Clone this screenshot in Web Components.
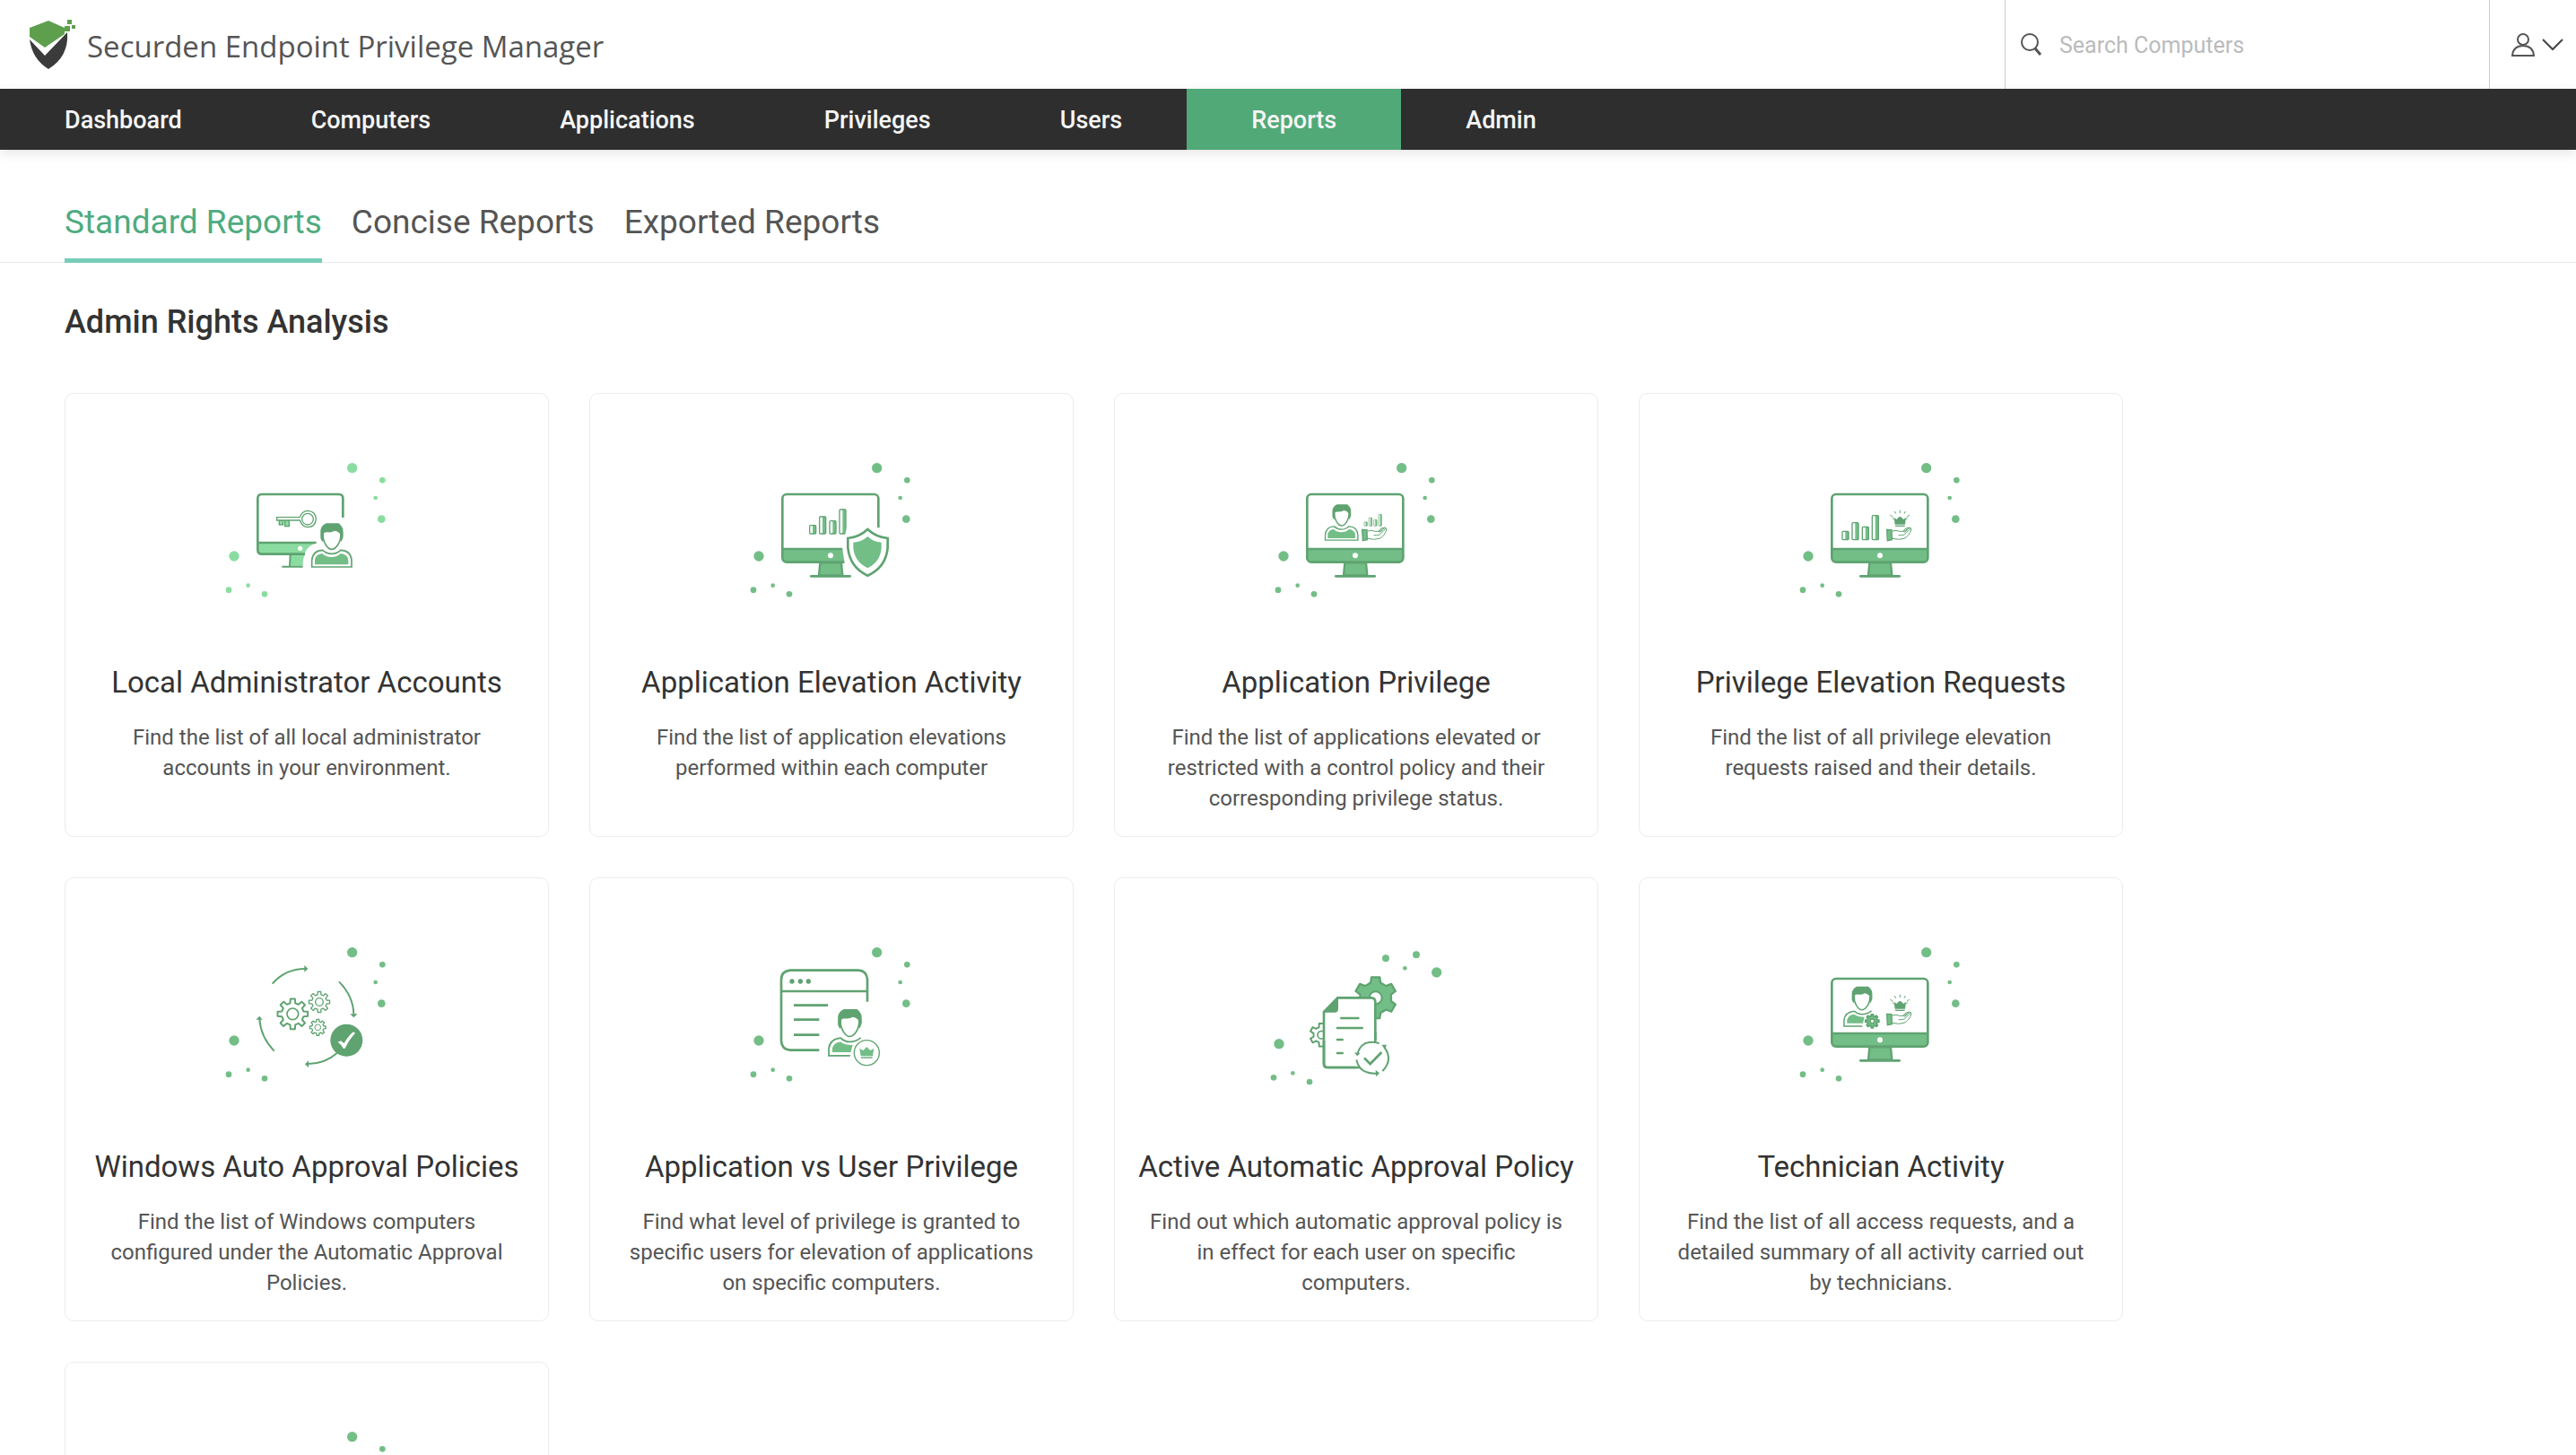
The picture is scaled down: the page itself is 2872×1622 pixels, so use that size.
<!DOCTYPE html>
<html lang="en">
<head>
<meta charset="utf-8">
<title>Securden Endpoint Privilege Manager</title>
<style>
    html, body {
        margin: 0;
        height: 100%;
        overflow: hidden;
    }
    body {
        background: #fff;
        color: #333;
        font-family: Roboto, "Liberation Sans", sans-serif;
    }
</style>
</head>
<body>

<app-header></app-header>
<app-nav active="Reports"></app-nav>
<report-tabs></report-tabs>
<report-section>
    <span slot="heading">Admin Rights Analysis</span>
    <report-card icon="accounts">
        <span slot="title">Local Administrator Accounts</span>
        Find the list of all local administrator accounts in your environment.
    </report-card>
    <report-card icon="elevation">
        <span slot="title">Application Elevation Activity</span>
        Find the list of application elevations performed within each computer
    </report-card>
    <report-card icon="privilege">
        <span slot="title">Application Privilege</span>
        Find the list of applications elevated or restricted with a control policy and their corresponding privilege status.
    </report-card>
    <report-card icon="requests">
        <span slot="title">Privilege Elevation Requests</span>
        Find the list of all privilege elevation requests raised and their details.
    </report-card>
    <report-card icon="windows">
        <span slot="title">Windows Auto Approval Policies</span>
        Find the list of Windows computers configured under the Automatic Approval Policies.
    </report-card>
    <report-card icon="user">
        <span slot="title">Application vs User Privilege</span>
        Find what level of privilege is granted to specific users for elevation of applications on specific computers.
    </report-card>
    <report-card icon="policy">
        <span slot="title">Active Automatic Approval Policy</span>
        Find out which automatic approval policy is in effect for each user on specific computers.
    </report-card>
    <report-card icon="technician">
        <span slot="title">Technician Activity</span>
        Find the list of all access requests, and a detailed summary of all activity carried out by technicians.
    </report-card>
    <report-card icon="blank"></report-card>
</report-section>

<script>
// ---------- drawing helpers ----------
const DARK = '#5fa371';
const LIGHT = '#73be87';
const PALE = '#8bdca1';

function dots(color = LIGHT) {
    return `<g fill="${color}">
        <circle cx="488" cy="65" r="17"/><circle cx="589" cy="106" r="10"/>
        <circle cx="566" cy="165" r="7"/><circle cx="586" cy="236" r="13"/>
        <circle cx="93" cy="360" r="17"/><circle cx="140" cy="458" r="7"/>
        <circle cx="75" cy="473" r="10"/><circle cx="195" cy="487" r="10"/>
    </g>`;
}

function monitor() {
    return `
        <path d="M172 336H493V366Q493 380 479 380H186Q172 380 172 366Z" fill="${LIGHT}"/>
        <path d="M298 382H369L373 424H294Z" fill="${LIGHT}" stroke="${DARK}" stroke-width="7"/>
        <g fill="none" stroke="${DARK}" stroke-width="8">
            <rect x="172" y="153" width="321" height="227" rx="14"/>
            <path d="M172 336H493"/>
            <path d="M268 427H398" stroke-linecap="round"/>
        </g>
        <circle cx="333" cy="358" r="9" fill="#fff"/>`;
}

function head(x, y, s) {
    return `<g transform="translate(${x} ${y}) scale(${s})">
        <path d="M39 38C39 66 56 88 68 88C82 88 99 66 99 38" fill="#fff" stroke="${DARK}" stroke-width="5"/>
        <path d="M31 50V26Q33 8 50 1H92L100 9Q107 16 107 30V46Q104 57 99 64L97 38Q92 28 78 26Q70 32 56 31Q44 30 42 35L39 64Q32 56 31 50Z" fill="${DARK}"/>
    </g>`;
}

function person(x, y, s) {
    return head(x, y, s) + `<g transform="translate(${x} ${y}) scale(${s})">
        <path d="M2 147V124Q6 92 38 91Q52 103 68 103Q86 103 98 91Q132 92 135 124V147Z" fill="#fff" stroke="${DARK}" stroke-width="5"/>
        <path d="M12 139V122Q16 104 36 102Q50 114 68 114Q86 114 98 102Q120 104 124 122V139Z" fill="${LIGHT}"/>
    </g>`;
}

// person whose right shoulder is hidden behind a badge
function halfPerson(x, y, s) {
    return head(x, y, s) + `<g transform="translate(${x} ${y}) scale(${s})">
        <path d="M104 90Q88 103 68 103Q54 103 40 91Q6 94 2 124V147H70" transform="translate(0 2)" fill="none" stroke="${DARK}" stroke-width="5"/>
        <path d="M13 138V126Q18 106 40 105Q52 115 78 115L72 138Z" fill="${LIGHT}"/>
    </g>`;
}

function bars(x, y, s) {
    const items = [[0, 28], [33, 57], [67, 43], [100, 81]];
    return `<g transform="translate(${x} ${y}) scale(${s})">` + items.map(([bx, h]) => `
        <rect x="${bx + 2}" y="${-h}" width="21" height="${h}" rx="3" fill="#fff"/>
        <rect x="${bx + 12}" y="${-h}" width="11" height="${h}" fill="${LIGHT}"/>
        <rect x="${bx + 2}" y="${-h}" width="21" height="${h}" rx="3" fill="none" stroke="${DARK}" stroke-width="4"/>`).join('') + '</g>';
}

function hand() {
    return `
        <path d="M356 271L372 272L373 305L358 308Z" fill="${LIGHT}" stroke="${DARK}" stroke-width="4"/>
        <g fill="none" stroke="${DARK}" stroke-width="3" stroke-linecap="round">
            <path d="M375 276Q388 271 398 277H410Q415 268 426 265Q438 262 438 270Q432 292 414 301Q396 307 375 301"/>
            <path d="M396 290Q414 292 420 283L435 268M411 278L430 267M415 280L424 273"/>
        </g>`;
}

function crown(x, y, s) {
    return `<g transform="translate(${x} ${y}) scale(${s})" fill="${DARK}">
        <path d="M0 1L9 7L14 1L20 -3L26 1L31 7L40 1L37 24H3Z"/>
        <rect x="4" y="27" width="32" height="4"/>
    </g>`;
}

function award() {
    return hand() + crown(380, 230, 1) +
        `<path d="M400 206V216M382 210L386 218M418 210L414 218M367 222L377 230M432 222L422 230M375 234L380 237M425 234L420 237" stroke="${DARK}" stroke-width="3"/>`;
}

// toothed wheel outline: n teeth between the root radius and the tip radius
function gear(cx, cy, tip, root, n, attrs) {
    const step = Math.PI * 2 / n;
    const pts = [];
    for (let i = 0; i < n; i++) {
        const a = i * step - Math.PI / 2;
        [[-0.30, root], [-0.19, tip], [0.19, tip], [0.30, root]].forEach(([k, r]) => {
            pts.push((cx + r * Math.cos(a + k * step)).toFixed(1) + ',' + (cy + r * Math.sin(a + k * step)).toFixed(1));
        });
    }
    return `<polygon points="${pts.join(' ')}" stroke-linejoin="round" ${attrs}/>`;
}

const line = w => `fill="none" stroke="${DARK}" stroke-width="${w}"`;

const icons = {
    accounts: () => dots(PALE) + `
        <path d="M172 316H366Q334 330 328 354H186Q172 354 172 340Z" fill="${PALE}"/>
        <path d="M282 354H330Q322 370 323 392H279Z" fill="${PALE}"/>
        <g ${line(8)}>
            <path d="M457 231V167Q457 153 443 153H186Q172 153 172 167V339Q172 353 186 353H330M172 315H368"/>
            <path d="M281 355L279 394M253 395H323" stroke-width="6"/>
        </g>
        <circle cx="314" cy="334" r="8" fill="#fff"/>
        <g fill="${PALE}" stroke="${DARK}" stroke-width="4">
            <rect x="244" y="240" width="13" height="15"/>
            <rect x="263" y="240" width="14" height="20"/>
            <path d="M236 230H313Q320 208 340 208Q366 210 367 236Q365 262 340 263Q320 262 313 240H236Z" fill="#fff"/>
            <circle cx="339" cy="236" r="19" fill="#fff"/>
        </g>` + person(351, 249, 1),

    elevation: () => dots() + monitor() + bars(261, 285, 1) + `
        <path d="M387 265H505V390H381L372 330Z" fill="#fff"/>
        <path d="M457 270Q430 296 391 300V332Q398 398 457 425Q518 398 524 332V300Q484 296 457 270Z" fill="#fff" stroke="${DARK}" stroke-width="8"/>
        <path d="M457 294Q438 312 409 314V334Q414 380 457 400Q499 380 503 334V314Q476 312 457 294Z" fill="${LIGHT}"/>`,

    privilege: () => dots() + monitor() + person(231, 186, 0.82) + bars(362, 259, 0.48) + hand(),

    requests: () => dots() + monitor() + bars(205, 305, 1) + award(),

    windows: () => dots() +
        gear(289, 271, 51, 37, 8, line(6)) + `<circle cx="289" cy="271" r="19" ${line(5)}/>` +
        gear(378, 231, 35, 25, 8, line(4)) + `<circle cx="378" cy="231" r="13" ${line(4)}/>` +
        gear(373, 316, 27, 20, 8, line(4)) + `<circle cx="373" cy="316" r="10" ${line(3)}/>
        <g ${line(6)}>
            <path d="M221 170Q264 120 332 120M444 163Q492 212 493 272M437 402Q396 438 340 438M227 395Q182 348 178 288"/>
        </g>
        <path d="M328 108L340 120L328 131ZM481 271H506L493 283ZM342 427L330 439L342 450ZM166 290L178 278L188 290Z" fill="${DARK}"/>
        <circle cx="469" cy="359" r="54" fill="${DARK}"/>
        <path d="M440 365L450 361L461 369Q476 343 492 331L498 335Q478 356 464 386H458Q452 373 440 365Z" fill="#fff"/>`,

    user: () => dots() + `
        <g ${line(8)}>
            <path d="M456 230V154Q453 126 426 125H198Q168 128 168 156V362Q170 390 198 392H295M168 195H456"/>
            <path d="M210 242H324M210 290H295M210 341H295"/>
        </g>
        <g fill="${DARK}"><circle cx="204" cy="162" r="8"/><circle cx="232" cy="162" r="8"/><circle cx="259" cy="162" r="8"/></g>` +
        halfPerson(325, 254, 1.05) + `
        <circle cx="454" cy="401" r="42" fill="#fff" stroke="#fff" stroke-width="14"/>
        <circle cx="454" cy="401" r="42" ${line(4)}/>
        <g fill="${LIGHT}"><path d="M430 386L442 393L454 381L466 393L478 386L474 412H434Z"/><path d="M435 415H473V419H435Z" fill="${DARK}"/></g>`,

    policy: () => `
        <g fill="${LIGHT}">
            <circle cx="435" cy="85" r="12"/><circle cx="537" cy="73" r="12"/><circle cx="499" cy="118" r="7"/>
            <circle cx="605" cy="132" r="17"/><circle cx="78" cy="371" r="17"/><circle cx="124" cy="469" r="7"/>
            <circle cx="60" cy="484" r="10"/><circle cx="180" cy="498" r="10"/>
        </g>` +
        gear(401, 217, 70, 53, 6, `fill="${LIGHT}" stroke="${DARK}" stroke-width="7"`) + `
        <circle cx="401" cy="217" r="21" fill="#fff" stroke="${DARK}" stroke-width="6"/>` +
        gear(220, 341, 39, 27, 6, line(6)) + `<circle cx="220" cy="341" r="13" ${line(5)}/>
        <path d="M274 217H386Q400 217 400 231V450H240Q228 450 228 438V264Z" fill="#fff" stroke="${DARK}" stroke-width="8"/>
        <path d="M228 266L276 217V254Q276 266 264 266Z" fill="${DARK}"/>
        <path d="M286 285H343M273 318H356M273 357H290M273 402H290" ${line(8)} stroke-linecap="round"/>
        <circle cx="391" cy="418" r="63" fill="#fff"/>
        <path d="M228 360V438Q228 450 240 450H348M400 330V364" ${line(8)}/>
        <g ${line(6)}>
            <path d="M413 369Q356 353 341 402M337 424Q346 472 404 470M424 462Q461 423 430 382"/>
            <path d="M363 418L383 438L421 399" stroke-width="8"/>
        </g>
        <path d="M330 400L350 402L339 412ZM401 458L414 469L402 481ZM421 374H438L432 389Z" fill="${DARK}"/>`,

    technician: () => dots() + monitor() + halfPerson(211, 178, 0.9) +
        gear(307, 295, 23, 17, 8, `fill="${LIGHT}" stroke="${DARK}" stroke-width="5"`) +
        `<circle cx="307" cy="295" r="7" fill="#fff" stroke="${DARK}" stroke-width="4"/>` + award(),

    blank: () => dots()
};

// ---------- components ----------
class AppHeader extends HTMLElement {
    constructor() {
        super();
        this.attachShadow({ mode: 'open' });
        this.shadowRoot.innerHTML = `
            <style>
                :host {
                    display: flex;
                    height: 99px;
                    background: #fff;
                }
                .brand {
                    display: flex;
                    align-items: center;
                    gap: 12px;
                    flex: 1;
                    padding-left: 33px;
                    color: #555;
                    font: 33px/48px "Open Sans", "Noto Sans", sans-serif;
                    text-decoration: none;
                }
                .brand span { padding-top: 4px; }
                .search {
                    display: flex;
                    align-items: center;
                    gap: 18px;
                    box-sizing: border-box;
                    width: 540px;
                    padding-left: 16px;
                    border-left: 1px solid #ccc;
                }
                input {
                    flex: 1;
                    padding: 2px 0 0;
                    border: 0;
                    outline: 0;
                    background: none;
                    color: #333;
                    font: 25px/36px Roboto, sans-serif;
                }
                input::placeholder { color: #bbb; }
                button {
                    display: flex;
                    align-items: center;
                    gap: 8px;
                    box-sizing: border-box;
                    width: 97px;
                    padding: 0 0 0 24px;
                    border: 0;
                    border-left: 1px solid #ccc;
                    background: none;
                }
                svg { display: block; flex: none; }
            </style>
            <a class="brand" href="#">
                <svg width="52" height="56" viewBox="0 0 52 56">
                    <path d="M0 22L17 40L42 14Q44 41 21 55Q3 44 0 22Z" fill="#3b3b3b"/>
                    <path d="M0 9L21 1L39 9V16L17 31L0 19Z" fill="#5e9f4e"/>
                    <path d="M42 0H47V5H42ZM39 7H45V13H39ZM47 6H51V10H47Z" fill="#5e9f4e"/>
                </svg>
                <span>Securden Endpoint Privilege Manager</span>
            </a>
            <label class="search">
                <svg width="26" height="26" viewBox="0 0 26 26" fill="none" stroke="#555">
                    <circle cx="11" cy="10" r="9" stroke-width="2"/>
                    <path d="M17 17L23 24" stroke-width="3"/>
                </svg>
                <input type="search" placeholder="Search Computers" aria-label="Search Computers">
            </label>
            <button type="button" aria-label="Account menu">
                <svg width="26" height="26" viewBox="0 0 26 26" fill="none" stroke="#555" stroke-width="2">
                    <ellipse cx="13" cy="7" rx="6" ry="6"/>
                    <path d="M1 25Q2 14 13 14Q24 14 25 25Z"/>
                </svg>
                <svg width="24" height="14" viewBox="0 0 24 14" fill="none" stroke="#444" stroke-width="2">
                    <path d="M1 1L12 12L23 1"/>
                </svg>
            </button>
        `;
    }
}

class AppNav extends HTMLElement {
    constructor() {
        super();
        this.attachShadow({ mode: 'open' });
        const items = ['Dashboard', 'Computers', 'Applications', 'Privileges', 'Users', 'Reports', 'Admin'];
        const active = this.getAttribute('active');
        this.shadowRoot.innerHTML = `
            <style>
                :host {
                    display: block;
                    background: #2e2e2e;
                    box-shadow: 0 4px 12px rgba(0, 0, 0, 0.1);
                }
                nav { display: flex; }
                a {
                    padding: 2px 72px 0;
                    color: #f5f5f5;
                    font-size: 27px;
                    font-weight: 500;
                    line-height: 66px;
                    text-decoration: none;
                }
                a.active { background: #50a977; }
            </style>
            <nav>${items.map(item => `<a href="#"${item === active ? ' class="active"' : ''}>${item}</a>`).join('')}</nav>
        `;
    }
}

class ReportTabs extends HTMLElement {
    constructor() {
        super();
        this.attachShadow({ mode: 'open' });
        this.shadowRoot.innerHTML = `
            <style>
                :host {
                    display: block;
                    padding: 36px 72px 0;
                    border-bottom: 1px solid #e9e9e9;
                }
                nav {
                    display: flex;
                    gap: 33px;
                    margin-bottom: -1px;
                }
                a {
                    padding: 20px 0 16px;
                    border-bottom: 5px solid transparent;
                    color: #555;
                    font-size: 37px;
                    line-height: 49px;
                    text-decoration: none;
                }
                a.active {
                    border-color: #76cdb8;
                    color: #4fab80;
                }
            </style>
            <nav>
                <a class="active" href="#">Standard Reports</a>
                <a href="#">Concise Reports</a>
                <a href="#">Exported Reports</a>
            </nav>
        `;
    }
}

class ReportSection extends HTMLElement {
    constructor() {
        super();
        this.attachShadow({ mode: 'open' });
        this.shadowRoot.innerHTML = `
            <style>
                :host {
                    display: block;
                    padding: 41px 72px;
                }
                h2 {
                    margin: 0 0 54px;
                    font-size: 36px;
                    font-weight: 500;
                    line-height: 50px;
                }
                .grid {
                    display: grid;
                    grid-template-columns: repeat(auto-fill, 540px);
                    gap: 45px;
                }
            </style>
            <h2><slot name="heading"></slot></h2>
            <div class="grid"><slot></slot></div>
        `;
    }
}

class ReportCard extends HTMLElement {
    constructor() {
        super();
        this.attachShadow({ mode: 'open' });
        const draw = icons[this.getAttribute('icon')] || icons.blank;
        this.shadowRoot.innerHTML = `
            <style>
                :host {
                    display: flex;
                    flex-direction: column;
                    align-items: center;
                    box-sizing: border-box;
                    min-height: 495px;
                    padding: 61px 0 20px;
                    border: 1px solid #ececec;
                    border-radius: 10px;
                    text-align: center;
                }
                h3 {
                    margin: 61px 0 24px;
                    font-size: 33px;
                    font-weight: 400;
                    line-height: 40px;
                    white-space: nowrap;
                }
                p {
                    margin: 0;
                    padding: 0 36px;
                    color: #555;
                    font-size: 24px;
                    line-height: 34px;
                }
            </style>
            <svg width="220" height="180" viewBox="6 0 660 540" aria-hidden="true">${draw()}</svg>
            <h3><slot name="title"></slot></h3>
            <p><slot></slot></p>
        `;
    }
}

customElements.define('app-header', AppHeader);
customElements.define('app-nav', AppNav);
customElements.define('report-tabs', ReportTabs);
customElements.define('report-section', ReportSection);
customElements.define('report-card', ReportCard);
</script>
</body>
</html>
